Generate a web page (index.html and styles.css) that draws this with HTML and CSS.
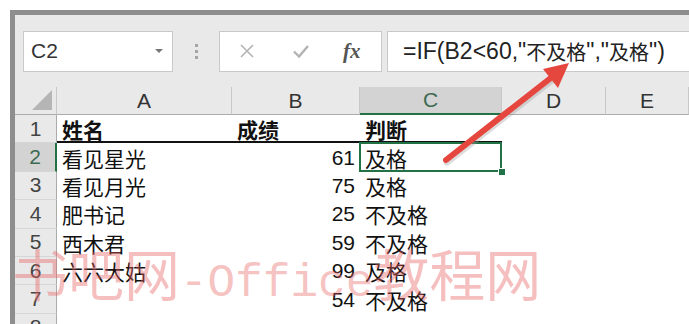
FILE: index.html
```html
<!DOCTYPE html>
<html lang="zh-CN">
<head>
  <meta charset="UTF-8">
  <meta name="viewport" content="width=device-width, initial-scale=1.0">
  <title>IF 函数 - 及格判断</title>
  <link rel="stylesheet" href="styles.css">
</head>
<body>
  <div class="window">
    <div class="formula-bar">
      <div class="name-box">
        <span>C2</span>
        <span class="caret"></span>
      </div>
      <div class="grip"><i></i><i></i><i></i></div>
      <div class="fx-box">
        <svg class="icon" width="16" height="16" viewBox="0 0 16 16"><path d="M2 2 L14 14 M14 2 L2 14" stroke="#b3b3b3" stroke-width="1.6" fill="none"/></svg>
        <svg class="icon" width="18" height="16" viewBox="0 0 18 16"><path d="M2 8.5 L7 13.5 L16 3" stroke="#b3b3b3" stroke-width="2.4" fill="none"/></svg>
        <span class="fx">fx</span>
      </div>
      <div class="formula">=IF(B2&lt;60,"<span class="cjk">不及格</span>","<span class="cjk">及格</span>")</div>
    </div>

    <div class="sheet">
      <div class="corner">
        <svg width="22" height="22" viewBox="0 0 22 22"><polygon points="1,21 21,21 21,1" fill="#b5b5b5"/></svg>
      </div>
      <div class="col-head">A</div>
      <div class="col-head">B</div>
      <div class="col-head active">C</div>
      <div class="col-head">D</div>
      <div class="col-head">E</div>

      <div class="row-head">1</div>
      <div class="cell title">姓名</div>
      <div class="cell title">成绩</div>
      <div class="cell title">判断</div>
      <div class="cell"></div>
      <div class="cell"></div>

      <div class="row-head active">2</div>
      <div class="cell">看见星光</div>
      <div class="cell num">61</div>
      <div class="cell selected">及格</div>
      <div class="cell"></div>
      <div class="cell"></div>

      <div class="row-head">3</div>
      <div class="cell">看见月光</div>
      <div class="cell num">75</div>
      <div class="cell">及格</div>
      <div class="cell"></div>
      <div class="cell"></div>

      <div class="row-head">4</div>
      <div class="cell">肥书记</div>
      <div class="cell num">25</div>
      <div class="cell">不及格</div>
      <div class="cell"></div>
      <div class="cell"></div>

      <div class="row-head">5</div>
      <div class="cell">西木君</div>
      <div class="cell num">59</div>
      <div class="cell">不及格</div>
      <div class="cell"></div>
      <div class="cell"></div>

      <div class="row-head">6</div>
      <div class="cell">六六大姑</div>
      <div class="cell num">99</div>
      <div class="cell">及格</div>
      <div class="cell"></div>
      <div class="cell"></div>

      <div class="row-head">7</div>
      <div class="cell"></div>
      <div class="cell num">54</div>
      <div class="cell">不及格</div>
      <div class="cell"></div>
      <div class="cell"></div>

      <div class="row-head">8</div>
      <div class="cell"></div>
      <div class="cell"></div>
      <div class="cell"></div>
      <div class="cell"></div>
      <div class="cell"></div>
    </div>
  </div>

  <svg class="arrow" width="689" height="324" viewBox="0 0 689 324">
    <line x1="446" y1="160" x2="552" y2="77" stroke="#9a9a9a" stroke-opacity="0.35" stroke-width="7" stroke-linecap="round" transform="translate(1,2)"/>
    <line x1="446" y1="160" x2="552" y2="77" stroke="#e5473f" stroke-width="6" stroke-linecap="round"/>
    <polygon points="569,63 543,69 558,88" fill="#e5473f"/>
  </svg>

  <div class="watermark">书吧网<span class="latin">-Office</span>教程网</div>
</body>
</html>
```

FILE: styles.css
```css
html, body {
  margin: 0;
  height: 324px;
  overflow: hidden;
}

body {
  background: #fff;
  font-family: "Liberation Sans", "Noto Sans CJK SC", sans-serif;
  color: #222;
  position: relative;
}

.window {
  margin: 10px 0 0 10px;
  border-top: 5px solid #8e8e8e;
  border-left: 5px solid #8e8e8e;
  background: #e9e9e9;
}

/* formula bar */
.formula-bar {
  display: flex;
  align-items: center;
  height: 72px;
  padding-left: 8px;
}
.name-box {
  display: flex;
  align-items: center;
  justify-content: space-between;
  box-sizing: border-box;
  width: 150px;
  height: 41px;
  padding: 0 9px 0 7px;
  background: #fff;
  border: 1px solid #c9c9c9;
  font-size: 21px;
  color: #333;
}
.caret {
  width: 0;
  height: 0;
  border-left: 4px solid transparent;
  border-right: 4px solid transparent;
  border-top: 4px solid #777;
}
.grip {
  width: 46px;
  display: flex;
  flex-direction: column;
  align-items: center;
  gap: 3px;
}
.grip i {
  width: 3px;
  height: 3px;
  background: #a5a5a5;
}
.fx-box {
  display: flex;
  align-items: center;
  box-sizing: border-box;
  width: 163px;
  height: 41px;
  padding-left: 19px;
  background: #fff;
  border: 1px solid #c9c9c9;
}
.fx-box .icon {
  margin-right: 37px;
}
.fx {
  font-family: "Liberation Serif", serif;
  font-style: italic;
  font-weight: bold;
  font-size: 21px;
  color: #555;
  margin-left: -4px;
}
.formula {
  flex: 1;
  display: flex;
  align-items: center;
  box-sizing: border-box;
  height: 41px;
  margin-left: 5px;
  padding-left: 15px;
  background: #fff;
  border: 1px solid #c9c9c9;
  border-right: none;
  font-size: 23px;
  color: #222;
  white-space: nowrap;
}
.formula .cjk {
  font-size: 20px;
}

/* sheet */
.sheet {
  display: grid;
  grid-template-columns: 42px 175px 128px 142px 104px 1fr;
  grid-template-rows: 28px repeat(8, 28.4px);
  background: #fff;
}
.corner {
  display: flex;
  align-items: flex-end;
  justify-content: flex-end;
  padding: 0 3px 3px 0;
  background: #e9e9e9;
  border-bottom: 1px solid #ababab;
  border-right: 1px solid #c8c8c8;
}
.col-head {
  display: flex;
  align-items: center;
  justify-content: center;
  background: #e9e9e9;
  border-bottom: 1px solid #ababab;
  border-right: 1px solid #c8c8c8;
  font-size: 21px;
  color: #333;
}
.col-head.active {
  background: #d3d3d3;
  color: #3d6b51;
  border-bottom: 2px solid #217346;
}
.row-head {
  display: flex;
  align-items: center;
  justify-content: center;
  background: #e9e9e9;
  border-right: 1px solid #ababab;
  border-bottom: 1px solid #d6d6d6;
  font-size: 21px;
  color: #444;
}
.row-head.active {
  background: #d3d3d3;
  color: #3d6b51;
  border-right: 2px solid #217346;
}
.cell {
  display: flex;
  align-items: center;
  padding: 0 5px;
  font-size: 21px;
  color: #111;
  white-space: nowrap;
}
.cell.title {
  font-weight: bold;
  box-shadow: inset 0 -2px 0 #111;
}
.cell.num {
  justify-content: flex-end;
}
.cell.selected {
  position: relative;
}
.cell.selected::after {
  content: "";
  position: absolute;
  inset: -1px 0 0 -1px;
  border: 2px solid #217346;
}
.cell.selected::before {
  content: "";
  position: absolute;
  right: -4px;
  bottom: -4px;
  width: 6px;
  height: 6px;
  background: #217346;
  border: 1px solid #fff;
  z-index: 1;
}

/* overlays */
.arrow {
  position: absolute;
  left: 0;
  top: 0;
  pointer-events: none;
}
.watermark {
  position: absolute;
  left: 12px;
  top: 244px;
  font-family: "Noto Sans CJK SC", sans-serif;
  font-size: 56px;
  line-height: 1;
  color: rgba(232, 95, 95, 0.4);
  white-space: nowrap;
  pointer-events: none;
}
.watermark .latin {
  font-family: "Liberation Mono", monospace;
  font-size: 46px;
}
```
